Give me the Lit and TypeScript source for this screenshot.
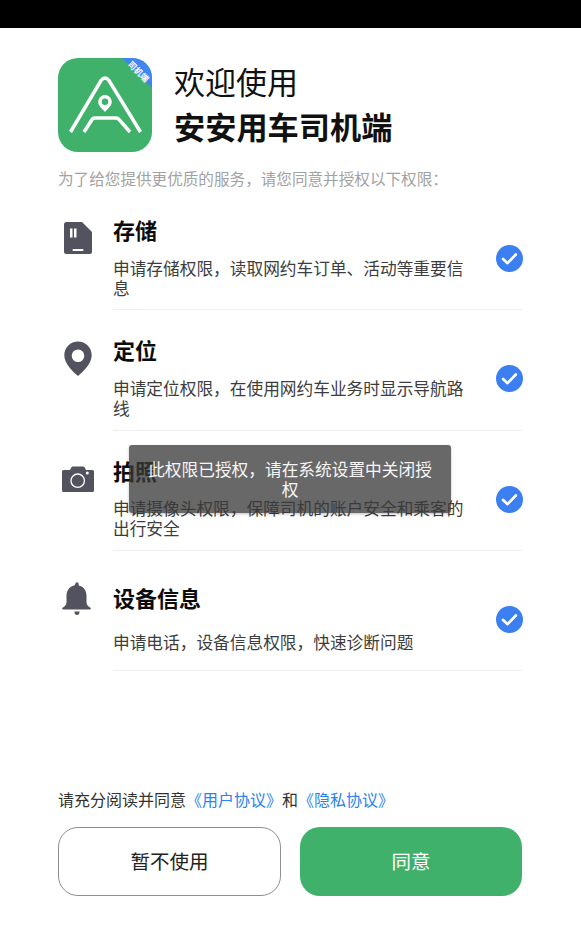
import { LitElement, html, css, svg } from "lit";
import { customElement } from "lit/decorators.js";

const F = "#53535f";
const ICONS = {
  storage: svg`<path d="M6.500 2H22l10 10v20a2 2 0 0 1-2 2H6.500a2.500 2.500 0 0 1-2.500-2.500v-27A2.500 2.500 0 0 1 6.500 2z" fill="${F}"/><rect x="10" y="8.500" width="2.500" height="9" fill="#fff"/><rect x="14" y="8.500" width="2.500" height="9" fill="#fff"/><rect x="12.700" y="29" width="10.600" height="2" fill="#fff"/>`,
  pin: svg`<path fill-rule="evenodd" d="M18 1.500c7.600 0 13.700 6.100 13.700 13.700C31.700 24 23 31.500 18 36 13 31.500 4.300 24 4.300 15.200 4.300 7.600 10.400 1.500 18 1.500zm0 8a6.300 6.300 0 1 0 0 12.600 6.300 6.300 0 0 0 0-12.600z" fill="${F}"/>`,
  camera: svg`<path d="M3.500 9H10l1.600-3q.3-.5 1-.5h10.800q.7 0 1 .5l1.600 3h6.500a1.500 1.500 0 0 1 1.500 1.500v19a1.500 1.500 0 0 1-1.500 1.500h-29A1.500 1.500 0 0 1 2 29.500v-19A1.500 1.500 0 0 1 3.500 9z" fill="${F}"/><circle cx="17.700" cy="19.700" r="6.700" fill="none" stroke="#fff" stroke-width="1.300"/><circle cx="27.300" cy="12" r="1.500" fill="#fff"/>`,
  bell: svg`<path d="M15.300 3a1.700 1.700 0 1 1 3.400 0v1.600c5 1 7.800 5.200 7.800 10.400v6.500c0 2.500 1.800 3.800 3.900 5.200.8.600.5 1.800-.5 1.800H3.100c-1 0-1.300-1.200-.5-1.800 2.100-1.400 3.900-2.700 3.900-5.200V15c0-5.200 2.800-9.400 7.800-10.400z" fill="${F}"/><path d="M14.300 30.500h5.400q-.5 3.500-2.700 3.500t-2.700-3.500z" fill="${F}"/>`,
};

const ROWS = [
  { icon: ICONS.storage, title: "存储", desc: "申请存储权限，读取网约车订单、活动等重要信息" },
  { icon: ICONS.pin, title: "定位", desc: "申请定位权限，在使用网约车业务时显示导航路线" },
  { icon: ICONS.camera, title: "拍照", desc: "申请摄像头权限，保障司机的账户安全和乘客的出行安全" },
  { icon: ICONS.bell, title: "设备信息", desc: "申请电话，设备信息权限，快速诊断问题" },
];

@customElement("app-root")
export class AppRoot extends LitElement {
  static styles = css`
    :host {
      display: flex;
      flex-direction: column;
      position: relative;
      height: 930px;
      overflow: hidden;
      background: #fff;
      font-family: "Noto Sans CJK SC", "Noto Sans", sans-serif;
      color: #111;
    }
    .status { height: 28px; background: #000; flex: none; }
    .head { display: flex; gap: 22px; padding: 30px 58px 0; }
    .logo { width: 94px; height: 94px; flex: none; display: block; }
    .welcome { font-size: 31px; line-height: 45px; font-weight: 400; }
    .app { font-size: 31.2px; line-height: 45px; font-weight: 700; }
    .sub { margin: 15px 58px 0; font-size: 15.6px; line-height: 22px; color: #a2a2a2; white-space: nowrap; }
    .rows { margin: 0.900px 59px 0 60px; display: flex; flex-direction: column; }
    .row { display: flex; height: 120.330px; }
    .ico { width: 36px; height: 36px; flex: none; margin: 30px 17px 0 0; display: block; }
    .main {
      flex: 1; min-width: 0; display: flex; align-items: flex-start;
      border-bottom: 1px solid #eeeeee; box-sizing: border-box;
    }
    .text {
      width: 354px; height: 100%; box-sizing: border-box; padding-top: 16px;
      display: flex; flex-direction: column; justify-content: space-evenly;
    }
    .title { font-size: 22px; line-height: 30px; font-weight: 700; color: #0c0c0c; margin: -3px 0 3px; }
    .desc { font-size: 16.7px; line-height: 20px; color: #3d3d3d; margin: -0.600px 0 0.600px; }
    .check { width: 27px; height: 27px; margin: 55px -1px 0 auto; display: block; flex: none; }
    .toast {
      position: absolute; left: 129px; top: 445px; width: 322px; height: 68px;
      box-sizing: border-box; padding: 14px 18px 0; border-radius: 3px;
      background: rgba(59, 59, 59, 0.77); box-shadow: 0 1px 3px rgba(0, 0, 0, 0.25);
      color: #f6f6f6; font-size: 16.7px; line-height: 20px; text-align: center;
    }
    .foot { margin-top: auto; padding: 0 59px 34px 58px; }
    .agree { font-size: 16px; line-height: 24px; color: #333; margin-bottom: 16px; white-space: nowrap; }
    .agree a { color: #2a83ee; text-decoration: none; }
    .btns { display: flex; gap: 19px; }
    .btn {
      height: 69px; box-sizing: border-box; border-radius: 20px; font-size: 19.5px; padding-bottom: 2px;
      display: flex; align-items: center; justify-content: center;
    }
    .ghost { width: 223px; border: 1px solid #8e8e8e; color: #222; background: #fff; }
    .primary { width: 222px; background: #3fb16b; color: #fff; }
  `;

  render() {
    return html`
      <div class="status"></div>
      <div class="head">
        <svg class="logo" viewBox="0 0 94 94">
          <defs><clipPath id="c"><rect width="94" height="94" rx="20"/></clipPath></defs>
          <g clip-path="url(#c)">
            <rect width="94" height="94" fill="#3fb16b"/>
            <path d="M64 0h30v30z" fill="#3f86f2"/>
            <text x="80" y="16.500" transform="rotate(45 80 14)" text-anchor="middle" font-size="8.500" fill="#fff" font-weight="700">司机端</text>
            <path d="M12.500 74 L43 22.500 Q47 17.500 51 22.500 L82.500 74" fill="none" stroke="#fff" stroke-width="3.500"/>
            <path d="M26 74 L34 61.500 Q35 60 37 60 H58 Q60 60 61 61.500 L72 74" fill="none" stroke="#fff" stroke-width="3.500"/>
            <path fill-rule="evenodd" d="M47 37a6.800 6.800 0 0 1 6.800 6.800C53.800 48 49.500 51 47 54 44.500 51 40.200 48 40.200 43.800A6.800 6.800 0 0 1 47 37zm0 3.500a3.300 3.300 0 1 0 0 6.600 3.300 3.300 0 0 0 0-6.600z" fill="#fff"/>
          </g>
        </svg>
        <div class="titles">
          <div class="welcome">欢迎使用</div>
          <div class="app">安安用车司机端</div>
        </div>
      </div>
      <div class="sub">为了给您提供更优质的服务，请您同意并授权以下权限：</div>
      <div class="rows">
        ${ROWS.map(
          (r) => html`
            <div class="row">
              <svg class="ico" viewBox="0 0 36 36">${r.icon}</svg>
              <div class="main">
                <div class="text">
                  <div class="title">${r.title}</div>
                  <div class="desc">${r.desc}</div>
                </div>
                <svg class="check" viewBox="0 0 26 26">
                  <circle cx="13" cy="13" r="13" fill="#3b7ff1"/>
                  <path d="M6.800 13.500l4.300 4 8-8.300" fill="none" stroke="#fff" stroke-width="2.600" stroke-linecap="round" stroke-linejoin="round"/>
                </svg>
              </div>
            </div>
          `
        )}
      </div>
      <div class="toast">此权限已授权，请在系统设置中关闭授权</div>
      <div class="foot">
        <div class="agree">请充分阅读并同意<a>《用户协议》</a>和<a>《隐私协议》</a></div>
        <div class="btns">
          <div class="btn ghost">暂不使用</div>
          <div class="btn primary">同意</div>
        </div>
      </div>
    `;
  }
}
